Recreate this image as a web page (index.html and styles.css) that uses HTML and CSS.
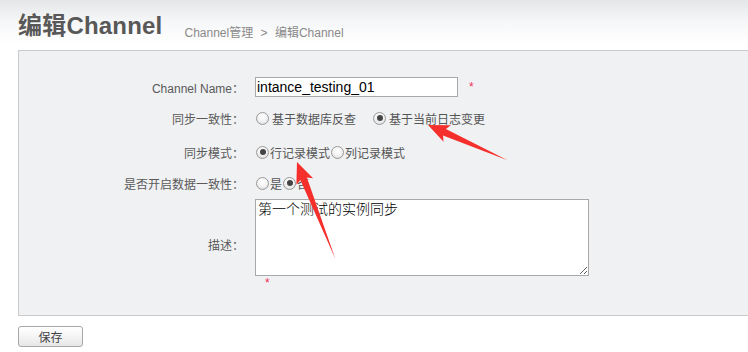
FILE: index.html
```html
<!DOCTYPE html>
<html lang="zh-cn">
<head>
    <meta charset="UTF-8">
    <title>编辑Channel</title>
    <link rel="stylesheet" href="styles.css">
</head>
<body>
    <!-- 标题 -->
    <div class="page-header">
        <h1 class="page-title">编辑Channel</h1>
        <div class="crumbs">Channel管理 <span class="sep">&gt;</span> 编辑Channel</div>
    </div>

    <!-- 表单 -->
    <div class="form-box">
        <div class="form-row row-name">
            <label class="form-label">Channel Name<span class="colon">：</span></label>
            <div class="form-field">
                <input class="text-input" type="text" value="intance_testing_01">
                <span class="required">*</span>
            </div>
        </div>

        <div class="form-row row-consistency">
            <label class="form-label">同步一致性<span class="colon">：</span></label>
            <div class="form-field">
                <label class="radio-item wide"><input type="radio" name="consistency"><span>基于数据库反查</span></label>
                <label class="radio-item wide"><input type="radio" name="consistency" checked><span>基于当前日志变更</span></label>
            </div>
        </div>

        <div class="form-row row-mode">
            <label class="form-label">同步模式<span class="colon">：</span></label>
            <div class="form-field">
                <label class="radio-item"><input type="radio" name="mode" checked><span>行记录模式</span></label>
                <label class="radio-item"><input type="radio" name="mode"><span>列记录模式</span></label>
            </div>
        </div>

        <div class="form-row row-check">
            <label class="form-label">是否开启数据一致性<span class="colon">：</span></label>
            <div class="form-field">
                <label class="radio-item"><input type="radio" name="check"><span>是</span></label>
                <label class="radio-item"><input type="radio" name="check" checked><span>否</span></label>
            </div>
        </div>

        <div class="form-row row-desc">
            <label class="form-label">描述<span class="colon">：</span></label>
            <div class="form-field column">
                <textarea class="desc-input">第一个测试的实例同步</textarea>
                <span class="required under">*</span>
            </div>
        </div>
    </div>

    <button class="save-button">保存</button>

    <!-- 截图上的红色箭头 -->
    <svg class="marks" width="748" height="352" viewBox="0 0 748 352">
        <polygon transform="translate(428 125) rotate(23.9)" points="0,0 21,-9 18,-3.5 87,0 18,3.5 21,9" fill="#f5302c"/>
        <polygon transform="translate(297 162) rotate(68.4)" points="0,0 21,-9 18,-3.5 104,0 18,3.5 21,9" fill="#f5302c"/>
    </svg>
</body>
</html>
```

FILE: styles.css
```css
body {
    margin: 0;
    padding: 0;
    background-color: #fff;
    font-family: "Liberation Sans", "Noto Sans CJK SC", sans-serif;
    font-size: 12px;
    color: #555;
    position: relative;
    width: 748px;
    height: 352px;
    overflow: hidden;
}

/* 标题 */
.page-header {
    height: 50px;
    padding-left: 18px;
    display: flex;
    align-items: flex-end;
    background: linear-gradient(to bottom, #e4e6e8 0, #f6f7f8 22px, #fff 44px);
}

.page-title {
    margin: 0 0 9px 0;
    font-size: 24px;
    font-weight: bold;
    color: #585858;
    line-height: 30px;
    letter-spacing: 0.2px;
}

.crumbs {
    margin: 0 0 10px 22px;
    color: #8a8a8a;
    font-size: 12px;
    line-height: 14px;
}

.crumbs .sep {
    margin: 0 4px;
}

/* 表单 */
.form-box {
    margin-left: 18px;
    border: 1px solid #c9cacc;
    border-right: none;
    background-color: #f0f1f3;
    padding: 26px 0 25px 0;
}

.form-row {
    display: flex;
    align-items: center;
}

.row-name { height: 20px; }
.row-consistency { height: 20px; margin-top: 11px; }
.row-mode { height: 20px; margin-top: 14px; }
.row-check { height: 20px; margin-top: 11px; }
.row-desc { margin-top: 6px; }

.form-label {
    width: 225px;
    text-align: right;
    padding-right: 11px;
    flex-shrink: 0;
    color: #5a5a5a;
}

.colon {
    font-family: "Noto Sans CJK TC", sans-serif;
}

.form-field {
    display: flex;
    align-items: center;
}

.form-field.column {
    flex-direction: column;
    align-items: flex-start;
}

.text-input {
    box-sizing: border-box;
    width: 203px;
    height: 20px;
    border: 1px solid #a9a9a9;
    padding: 0 1px;
    font-family: "Liberation Sans", sans-serif;
    font-size: 14px;
    color: #000;
    background: #fff;
    outline: none;
}

.required {
    color: #f0305a;
    margin-left: 11px;
    font-size: 12px;
}

.required.under {
    margin-left: 10px;
    line-height: 14px;
    height: 14px;
}

.desc-input {
    box-sizing: border-box;
    width: 334px;
    height: 77px;
    border: 1px solid #a9a9a9;
    padding: 0 2px;
    font-family: "Noto Sans CJK SC", sans-serif;
    font-weight: 300;
    font-size: 14px;
    line-height: 16px;
    color: #000;
    background: #fff;
    outline: none;
    resize: both;
}

/* 单选 */
.radio-item {
    display: flex;
    align-items: center;
    color: #555;
}

.radio-item input {
    appearance: none;
    -webkit-appearance: none;
    width: 13px;
    height: 13px;
    margin: 0 1px 0 1px;
    border: 1px solid #9a9a9a;
    border-radius: 50%;
    background: radial-gradient(circle at 50% 35%, #fff 0, #f4f4f4 45%, #d6d6d6 100%);
    box-sizing: border-box;
    position: relative;
}

.radio-item input:checked::after {
    content: "";
    position: absolute;
    left: 2.5px;
    top: 2.5px;
    width: 6px;
    height: 6px;
    border-radius: 50%;
    background: #444;
}

.radio-item.wide input {
    margin-right: 3px;
}

.radio-item.wide + .radio-item.wide {
    margin-left: 16px;
}

/* 按钮 */
.save-button {
    margin: 10px 0 0 18px;
    width: 65px;
    height: 21px;
    border: 1px solid #a8a8a8;
    border-radius: 3px;
    background: linear-gradient(to bottom, #fff 0, #f2f2f2 60%, #e6e6e6 100%);
    font-family: "Noto Sans CJK SC", sans-serif;
    font-size: 12px;
    color: #444;
    padding: 0;
    line-height: 18px;
}

/* 标注箭头 */
.marks {
    position: absolute;
    left: 0;
    top: 0;
    pointer-events: none;
}
```
